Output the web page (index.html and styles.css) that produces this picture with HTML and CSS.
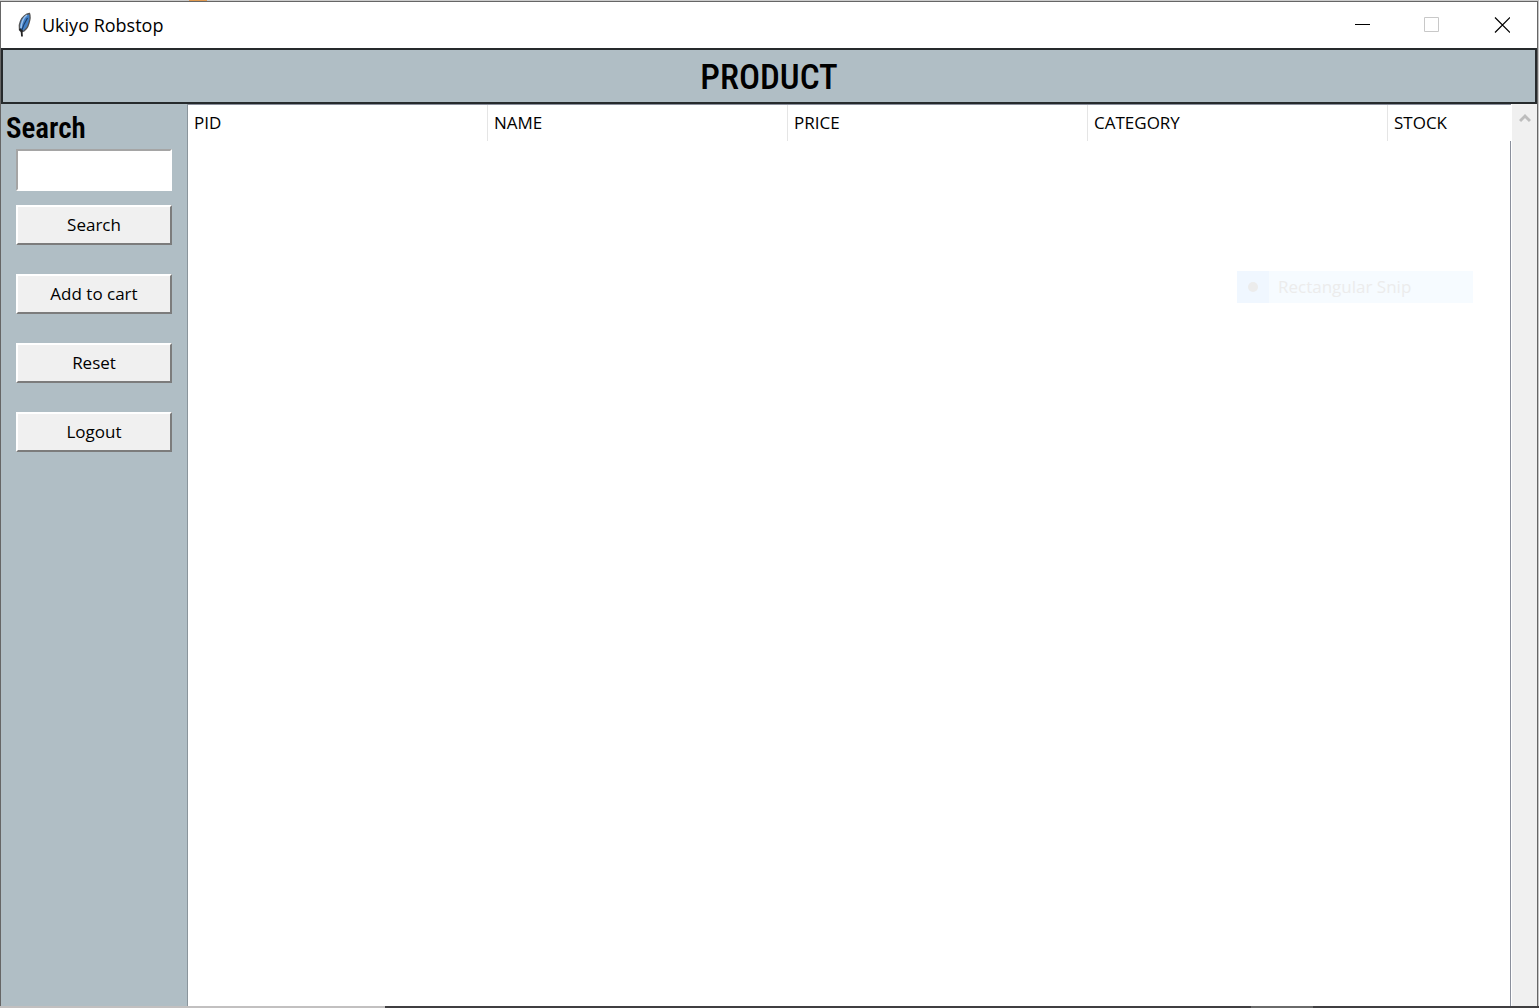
FILE: index.html
```html
<!DOCTYPE html>
<html lang="en">
<head>
<meta charset="utf-8">
<title>Ukiyo Robstop</title>
<link rel="stylesheet" href="styles.css">
</head>
<body>
<div class="desktop">
  <div class="edge-top"></div>
  <div class="window">
    <header class="titlebar">
      <svg class="feather" viewBox="0 0 16 26" aria-hidden="true">
        <path d="M13.500 1.500C10 2 6 5 4.500 9C3 12 3 15 3.500 18L5.500 20C9 19 12 15 13 11C14 8 14.500 4 13.500 1.500Z" fill="#4180c8" stroke="#555" stroke-width="1.300"/>
        <path d="M11 3C7 6 5.500 10 5 16" fill="none" stroke="#9cc3ee" stroke-width="1.500"/>
        <path d="M11.500 6C9 10 7 14 5.500 19" fill="none" stroke="#1f3f68" stroke-width="1.200"/>
        <path d="M3.500 17L6.500 19.500M5.500 18L6 24.500" fill="none" stroke="#222" stroke-width="1.800"/>
      </svg>
      <span class="title">Ukiyo Robstop</span>
      <div class="controls">
        <button class="control" type="button" aria-label="Minimize"><svg viewBox="0 0 16 16"><path d="M1 7.500H16" stroke="#000" fill="none"/></svg></button>
        <button class="control" type="button" aria-label="Maximize" disabled><svg viewBox="0 0 16 16"><path d="M.5 .5H14.500V14.500H.5Z" stroke="#c8c8c8" fill="none"/></svg></button>
        <button class="control" type="button" aria-label="Close"><svg viewBox="0 0 16 16"><path d="M1 .5L16 15.500M16 .5L1 15.500" stroke="#000" stroke-width="1.200" fill="none"/></svg></button>
      </div>
    </header>
    <h1 class="banner">PRODUCT</h1>
    <div class="main">
      <form class="sidebar">
        <label class="search-label" for="search">Search</label>
        <input class="search-box" id="search" type="text">
        <button class="action" type="button">Search</button>
        <button class="action" type="button">Add to cart</button>
        <button class="action" type="button">Reset</button>
        <button class="action" type="button">Logout</button>
      </form>
      <div class="list">
        <table class="products">
          <thead><tr><th scope="col">PID</th><th scope="col">NAME</th><th scope="col">PRICE</th><th scope="col">CATEGORY</th><th scope="col">STOCK</th></tr></thead>
        </table>
        <div class="rows"></div>
        <div class="snip"><span class="snip-icon"><span class="dot"></span></span><span class="snip-text">Rectangular Snip</span></div>
      </div>
      <div class="scrollbar">
        <svg viewBox="0 0 12 10" aria-hidden="true"><path d="M1 8L6 3L11 8" fill="none" stroke="#bdbdbd" stroke-width="3"/></svg>
      </div>
    </div>
  </div>
  <div class="edge-bottom"></div>
</div>
</body>
</html>
```
FILE: styles.css
```css
* { box-sizing: border-box; }
body { margin: 0; font-family: "Open Sans", "Noto Sans", sans-serif; color: #000; }
button, input { font: inherit; color: inherit; border-radius: 0; }

.desktop { display: flex; flex-direction: column; height: 100vh; padding-right: 1px; background: #c4c4c4; }
.edge-top { height: 1px; background: linear-gradient(90deg, transparent 189px, #e09a50 189px 207px, transparent 207px) #cccccc; }
.edge-bottom { height: 2px; margin-right: -1px; background: linear-gradient(90deg, #c2c0c0 385px, #403f41 385px 1251px, #6a6a6a 1251px 1313px, #403f41 1313px); }
.window { flex: 1; min-height: 0; display: flex; flex-direction: column; border: 1px solid #666; border-bottom: 0; background: #fff; }

.titlebar { display: flex; align-items: center; height: 46px; padding-left: 15px; }
.feather { width: 16px; height: 26px; }
.title { margin-left: 10px; font-size: 18px; line-height: 24px; }
.controls { display: flex; align-self: stretch; margin-left: auto; }
.control { display: flex; align-items: center; justify-content: center; width: 70px; padding: 0; border: 0; background: none; }
.control svg { width: 16px; height: 16px; }

.banner { margin: 0; height: 56px; border: 2px solid #262a2c; background: #b0bec5; font: 500 35px/56px "Roboto Condensed", "Liberation Sans Narrow", Roboto, sans-serif; text-align: center; }

.main { flex: 1; min-height: 0; display: flex; }
.sidebar { display: flex; flex-direction: column; width: 187px; padding: 6px 15px 0; border-right: 1px solid #8a959c; background: #b0bec5; }
.search-label { margin: 0 0 3px -10px; font: 600 29px/36px "Roboto Condensed", "Liberation Sans Narrow", Roboto, sans-serif; }
.search-box { width: 100%; height: 42px; margin-bottom: 14px; padding: 2px 6px; border: 2px solid; border-color: #a5a5a5 #fff #fff #a5a5a5; background: #fff; font-size: 18px; }
.action { height: 40px; margin-bottom: 29px; padding: 0; border: 2px solid; border-color: #fff #7c7c7c #7c7c7c #fff; background: #f0f0f0; font-size: 17px; line-height: 24px; }

.list { position: relative; flex: 1; min-width: 0; display: flex; flex-direction: column; border-top: 1px solid #8a8f9c; }
.products { width: 100%; border-collapse: separate; border-spacing: 0; table-layout: fixed; }
.products th { width: 300px; height: 36px; padding: 0 6px; border-right: 1px solid #e5e5e5; font-size: 17px; font-weight: 400; line-height: 24px; text-align: left; }
.products th:last-child { width: auto; border-right: 0; }
.rows { flex: 1; border-right: 1px solid #8a8f9c; }

.snip { position: absolute; top: 166px; right: 38px; display: flex; align-items: center; width: 236px; height: 32px; background: #f6fbff; color: #ececec; font-size: 17px; line-height: 24px; }
.snip-icon { display: flex; align-items: center; justify-content: center; align-self: stretch; width: 32px; background: #f0f7ff; }
.dot { width: 10px; height: 10px; border-radius: 50%; background: #ececec; }
.snip-text { margin-left: 9px; }

.scrollbar { width: 25px; margin-left: 1px; padding-top: 8px; background: #f0f0f0; text-align: center; line-height: 10px; }
.scrollbar svg { width: 12px; height: 10px; }
```
